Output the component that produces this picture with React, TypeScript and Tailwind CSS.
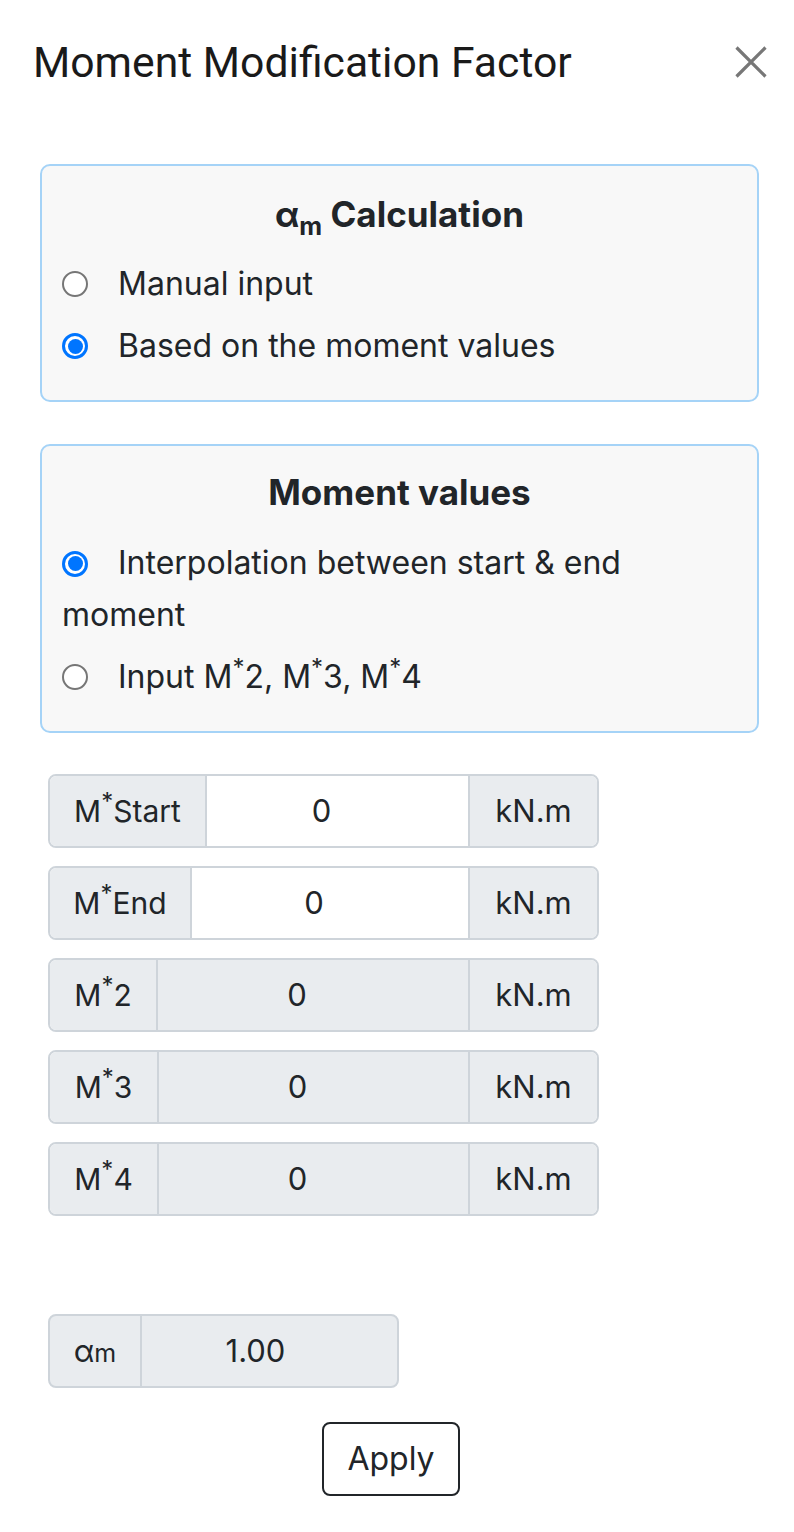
function Radio({ checked }: { checked: boolean }) {
  return checked ? (
    <span className="inline-flex w-[26px] h-[26px] shrink-0 rounded-full border-[3px] border-[#0075ff] bg-white items-center justify-center align-middle">
      <span className="w-[15px] h-[15px] rounded-full bg-[#0075ff]" />
    </span>
  ) : (
    <span className="inline-block w-[26px] h-[26px] shrink-0 rounded-full border-2 border-[#767676] bg-white align-middle" />
  );
}

function Star() {
  return <sup className="text-[24px] top-[-12px]">*</sup>;
}

type Row = {
  label: React.ReactNode;
  labelW: string;
  value: string;
  enabled: boolean;
};

const rows: Row[] = [
  { label: <>M<Star />Start</>, labelW: "w-[157px]", value: "0", enabled: true },
  { label: <>M<Star />End</>, labelW: "w-[142px]", value: "0", enabled: true },
  { label: <>M<Star />2</>, labelW: "w-[108px]", value: "0", enabled: false },
  { label: <>M<Star />3</>, labelW: "w-[109px]", value: "0", enabled: false },
  { label: <>M<Star />4</>, labelW: "w-[109px]", value: "0", enabled: false },
];

export default function App() {
  return (
    <div className="w-[794px] min-h-[1532px] bg-white text-[#212529] font-['Inter',sans-serif]">
      <div className="flex items-center justify-between pl-[33px] pr-[27px] pt-[38px]">
        <h1 className="font-['Roboto',sans-serif] text-[42.7px] leading-[48px] text-[#1a1a1a]">
          Moment Modification Factor
        </h1>
        <svg width="32" height="32" viewBox="0 0 32 32" className="text-[#777]">
          <path d="M1.5 1.5 30.5 30.5 M30.5 1.5 1.5 30.5" stroke="currentColor" strokeWidth="3.2" />
        </svg>
      </div>

      <div className="px-[40px] pt-[78px]">
        <div className="border-2 border-[#a5d3f7] rounded-[10px] bg-[#f8f8f8] px-[20px] pt-[26px] pb-[23px] w-[719px]">
          <div className="text-center font-bold text-[35px] leading-[44px]">
            α<sub className="text-[25px] bottom-[-8px]">m</sub> Calculation
          </div>
          <div className="text-[32px] leading-[62px] mt-[17px]">
            <div className="flex items-center gap-[30px]">
              <Radio checked={false} />
              <span>Manual input</span>
            </div>
            <div className="flex items-center gap-[30px]">
              <Radio checked={true} />
              <span>Based on the moment values</span>
            </div>
          </div>
        </div>

        <div className="border-2 border-[#a5d3f7] rounded-[10px] bg-[#f8f8f8] px-[20px] pt-[24px] pb-[29px] w-[719px] mt-[42px]">
          <div className="text-center font-bold text-[35px] leading-[44px]">Moment values</div>
          <div className="text-[32px] leading-[50px] mt-[24px]">
            <div>
              <span className="inline-block align-middle mr-[30px] relative top-[-4px]">
                <Radio checked={true} />
              </span>
              Interpolation between start &amp; end moment
            </div>
            <div className="flex items-center gap-[30px] mt-[12px]">
              <Radio checked={false} />
              <span>
                Input M<Star />2, M<Star />3, M<Star />4
              </span>
            </div>
          </div>
        </div>

        <div className="pl-[8px] pt-[41px] flex flex-col gap-[18px]">
          {rows.map((r, i) => (
            <div
              key={i}
              className="flex w-[551px] h-[74px] border-2 border-[#ced4da] rounded-[8px] overflow-hidden text-[31px]"
            >
              <div
                className={`${r.labelW} shrink-0 bg-[#e9ecef] border-r-2 border-[#ced4da] flex items-center justify-center text-[30px]`}
              >
                <span>{r.label}</span>
              </div>
              <div
                className={`flex-1 flex items-center justify-center pr-[32px] ${
                  r.enabled ? "bg-white" : "bg-[#e9ecef]"
                }`}
              >
                {r.value}
              </div>
              <div className="w-[129px] shrink-0 bg-[#e9ecef] border-l-2 border-[#ced4da] flex items-center justify-center">
                kN.m
              </div>
            </div>
          ))}
        </div>

        <div className="pl-[8px] pt-[98px]">
          <div className="flex w-[351px] h-[74px] border-2 border-[#ced4da] rounded-[8px] overflow-hidden bg-[#e9ecef] text-[31px]">
            <div className="w-[92px] shrink-0 border-r-2 border-[#ced4da] flex items-center justify-center">
              <span>
                α<span className="text-[25px]">m</span>
              </span>
            </div>
            <div className="flex-1 flex items-center justify-center pr-[28px]">1.00</div>
          </div>
        </div>

        <div className="flex justify-center pt-[34px] pr-[12px]">
          <button className="w-[138px] h-[74px] border-2 border-[#212529] rounded-[8px] text-[32px] bg-white">
            Apply
          </button>
        </div>
      </div>
    </div>
  );
}
